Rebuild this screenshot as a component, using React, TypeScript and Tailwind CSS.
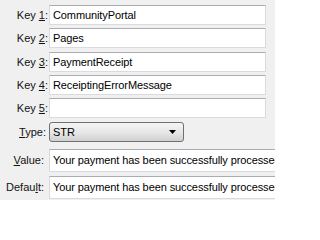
import React from 'react';

const font = { fontFamily: '"Liberation Sans", Arial, sans-serif' };

// label with one underlined accelerator char
const Label = ({ pre, key1, post, className = '' }: { pre: string; key1: string; post: string; className?: string }) => (
  <div className={`w-[48px] shrink-0 text-right text-[11px] tracking-[0px] text-[#111] whitespace-nowrap ${className}`}>
    {pre}
    <span className="underline underline-offset-[1px]">{key1}</span>
    {post}
  </div>
);

const TextBox = ({ value, wide = false, tall = false }: { value: string; wide?: boolean; tall?: boolean }) => (
  <div
    className={`${wide ? 'w-[260px]' : 'w-[217px]'} ${tall ? 'h-[23px]' : 'h-[20px]'} shrink-0 flex items-center bg-white border border-[#d9dbe0] border-t-[#abadb3] pl-[3px] text-[11px] tracking-[-0.1px] text-black whitespace-nowrap overflow-hidden`}
  >
    {value}
  </div>
);

export default function App() {
  const keys = ['CommunityPortal', 'Pages', 'PaymentReceipt', 'ReceiptingErrorMessage', ''];
  const tops = ['mt-[5px]', 'mt-[3px]', 'mt-[4px]', 'mt-[3px]', 'mt-[3px]'];

  return (
    <div className="w-[275px] h-[200px] bg-[#f0f0f0] overflow-hidden flex flex-col" style={font}>
      {keys.map((k, i) => (
        <div key={i} className={`flex items-center gap-[1px] ${tops[i]}`}>
          <Label pre="Key " key1={String(i + 1)} post=":" />
          <TextBox value={k} />
        </div>
      ))}

      <div className="flex items-center gap-[1px] mt-[4px]">
        <Label pre="" key1="T" post="ype:" className="pr-[2px]" />
        <div className="w-[135px] h-[20px] shrink-0 flex items-center justify-between rounded-[3px] border border-[#707070] bg-gradient-to-b from-[#f4f4f4] via-[#e8e8e8] to-[#d0d0d0] pl-[3px] pr-[6px] text-[11px] text-black">
          <span>STR</span>
          <svg width="8" height="5" viewBox="0 0 8 5">
            <path d="M0 0 H7 L3.5 4 Z" fill="#000" />
          </svg>
        </div>
      </div>

      <div className="flex items-center gap-[1px] mt-[7px]">
        <Label pre="" key1="V" post="alue:" className="pr-[4px]" />
        <TextBox value="Your payment has been successfully processed." wide tall />
      </div>

      <div className="flex items-center gap-[1px] mt-[4px]">
        <Label pre="Defau" key1="l" post="t:" className="pr-[4px]" />
        <TextBox value="Your payment has been successfully processed." wide tall />
      </div>
    </div>
  );
}
